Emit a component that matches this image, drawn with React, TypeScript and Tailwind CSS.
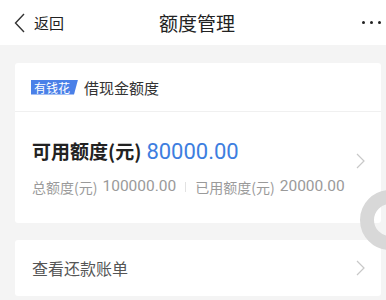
import React from "react";

const Chevron = ({ className = "" }: { className?: string }) => (
  <svg width="9" height="16" viewBox="0 0 9 16" className={className} fill="none">
    <path d="M1 1 L8 8 L1 15" stroke="#c8c8c8" strokeWidth="1.2" />
  </svg>
);

export default function App() {
  return (
    <div
      className="relative w-[386px] h-[300px] overflow-hidden bg-[#f4f4f4]"
      style={{ fontFamily: '"Noto Sans CJK SC", "Noto Sans", Roboto, sans-serif' }}
    >
      {/* header */}
      <div className="relative h-[45px] bg-white flex items-center">
        <div className="flex items-center pl-[14px]">
          <svg width="11" height="20" viewBox="0 0 11 20" fill="none">
            <path d="M10 1 L1.5 10 L10 19" stroke="#333" strokeWidth="1.4" />
          </svg>
          <span className="ml-[9px] text-[15px] text-[#222] leading-none">返回</span>
        </div>
        <div className="absolute left-0 right-0 top-0 h-[45px] flex items-center justify-center pointer-events-none">
          <span className="text-[19px] text-[#222] leading-none ml-[8px]">额度管理</span>
        </div>
        <div className="ml-auto mr-[5px] flex gap-[5px] items-center">
          <span className="w-[3px] h-[3px] rounded-full bg-[#222]" />
          <span className="w-[3px] h-[3px] rounded-full bg-[#222]" />
          <span className="w-[3px] h-[3px] rounded-full bg-[#222]" />
        </div>
      </div>

      {/* card 1 */}
      <div className="ml-[15px] mr-[5px] mt-[18px] bg-white rounded-[3px]">
        <div className="h-[49px] flex items-center pl-[16px] border-b border-[#f0f0f0]">
          <span
            className="h-[15px] bg-[#4a80e8] text-white text-[12px] leading-[15px] pl-[3px] pr-[8px]"
            style={{ clipPath: "polygon(0 0, 100% 0, calc(100% - 4px) 100%, 0 100%)" }}
          >
            有钱花
          </span>
          <span className="ml-[6px] text-[15px] text-[#333] leading-none">借现金额度</span>
        </div>
        <div className="flex items-center h-[111px] pl-[17px] pr-[16px]">
          <div className="flex-1">
            <div className="flex items-baseline">
              <span className="text-[19px] font-bold text-[#222] leading-none">可用额度(元)</span>
              <span
                className="ml-[5px] text-[22px] text-[#3d7ee0] leading-none"
                style={{ fontFamily: "Roboto, sans-serif" }}
              >
                80000.00
              </span>
            </div>
            <div className="flex items-center mt-[16px] text-[#9a9a9a]">
              <span className="text-[14px] leading-none">总额度(元)</span>
              <span className="ml-[5px] text-[15.5px] leading-none" style={{ fontFamily: "Roboto, sans-serif" }}>
                100000.00
              </span>
              <span className="mx-[9px] w-px h-[10px] bg-[#e2e2e2]" />
              <span className="text-[14px] leading-none">已用额度(元)</span>
              <span className="ml-[5px] text-[15.5px] leading-none" style={{ fontFamily: "Roboto, sans-serif" }}>
                20000.00
              </span>
            </div>
          </div>
          <Chevron className="-mt-[14px]" />
        </div>
      </div>

      {/* card 2 */}
      <div className="ml-[15px] mr-[5px] mt-[17px] h-[56px] bg-white rounded-[3px] flex items-center pl-[17px] pr-[16px]">
        <span className="flex-1 text-[16px] text-[#555] leading-none">查看还款账单</span>
        <Chevron />
      </div>

      {/* floating ring */}
      <div className="absolute left-[360px] top-[190px] w-[60px] h-[60px] rounded-full border-[14px] border-[#d8d8d8]" />
    </div>
  );
}
